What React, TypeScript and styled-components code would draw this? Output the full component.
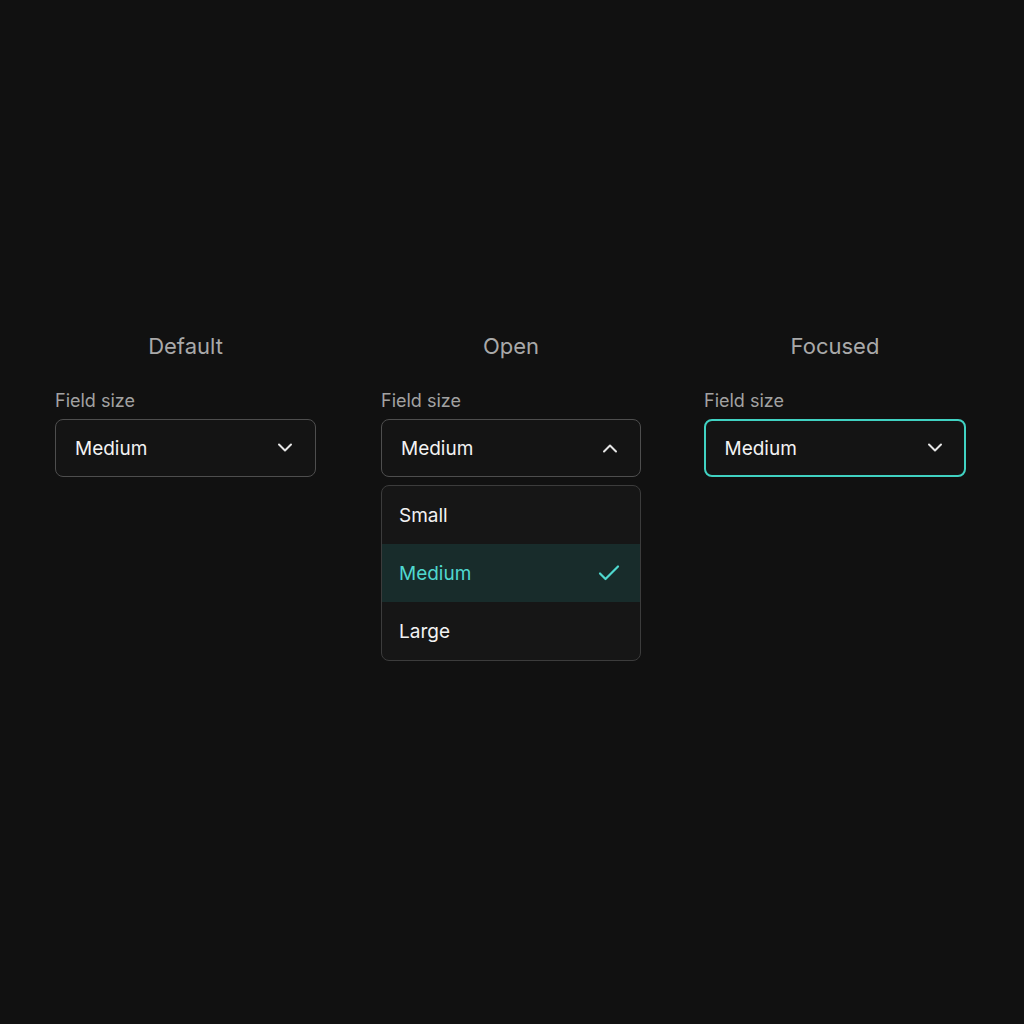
import React from 'react';
import styled, { createGlobalStyle } from 'styled-components';

const GlobalStyle = createGlobalStyle`
  html, body {
    margin: 0;
    padding: 0;
    background: #111111;
  }
  body {
    font-family: Inter, "Noto Sans", "Liberation Sans", sans-serif;
    -webkit-font-smoothing: antialiased;
  }
`;

const Page = styled.div`
  width: 1024px;
  height: 1024px;
  background: #111111;
  padding: 332px 0 0 55px;
  box-sizing: border-box;
`;

const Columns = styled.div`
  display: grid;
  grid-template-columns: 261px 261px 261px;
  column-gap: 64px;
`;

const Column = styled.div<{ $nudge?: number }>`
  display: flex;
  flex-direction: column;
  margin-left: ${p => p.$nudge ?? 0}px;
`;

const Heading = styled.div`
  text-align: center;
  font-size: 22px;
  color: #a9a9a9;
  line-height: 28px;
  margin-bottom: 30px;
`;

const Label = styled.div`
  font-size: 18px;
  color: #a2a2a2;
  line-height: 22px;
  margin-bottom: 7px;
`;

const Trigger = styled.div<{ $focused?: boolean }>`
  height: 58px;
  box-sizing: border-box;
  border: ${p => (p.$focused ? '2px solid #40d2c2' : '1.5px solid #4e4e4e')};
  border-radius: 8px;
  background: #141414;
  display: flex;
  align-items: center;
  justify-content: space-between;
  padding: 0 ${p => (p.$focused ? 21.5 : 22)}px 0 ${p => (p.$focused ? 18.5 : 19)}px;
  font-size: 19px;
  color: #f2f2f2;
`;

const Menu = styled.div`
  margin-top: 8px;
  border: 1px solid #3c3c3c;
  border-radius: 8px;
  background: #161616;
  overflow: hidden;
  display: flex;
  flex-direction: column;
`;

const Option = styled.div<{ $selected?: boolean }>`
  height: 58px;
  display: flex;
  align-items: center;
  justify-content: space-between;
  padding: 0 20px 0 17px;
  font-size: 19px;
  color: ${p => (p.$selected ? '#4fd8cf' : '#f2f2f2')};
  background: ${p => (p.$selected ? '#182c2b' : 'transparent')};
`;

const Chevron: React.FC<{ up?: boolean }> = ({ up }) => (
  <svg width="16" height="10" viewBox="0 0 16 10" fill="none">
    <path
      d={up ? 'M2 8.5 L8 2.5 L14 8.5' : 'M2 1.5 L8 7.5 L14 1.5'}
      stroke="#e6e6e6"
      strokeWidth="2"
      strokeLinecap="round"
      strokeLinejoin="round"
    />
  </svg>
);

const Check = () => (
  <svg width="22" height="18" viewBox="0 0 22 18" fill="none">
    <path
      d="M2 9.5 L7.5 15 L20 2.5"
      stroke="#4fd8cf"
      strokeWidth="2.2"
      strokeLinecap="round"
      strokeLinejoin="round"
    />
  </svg>
);

const App: React.FC = () => {
  return (
    <>
      <GlobalStyle />
      <Page>
        <Columns>
          <Column>
            <Heading>Default</Heading>
            <Label>Field size</Label>
            <Trigger>
              <span>Medium</span>
              <Chevron />
            </Trigger>
          </Column>
          <Column $nudge={1}>
            <Heading>Open</Heading>
            <Label>Field size</Label>
            <Trigger>
              <span>Medium</span>
              <Chevron up />
            </Trigger>
            <Menu>
              <Option>Small</Option>
              <Option $selected>
                <span>Medium</span>
                <Check />
              </Option>
              <Option>Large</Option>
            </Menu>
          </Column>
          <Column $nudge={-1}>
            <Heading>Focused</Heading>
            <Label>Field size</Label>
            <Trigger $focused>
              <span>Medium</span>
              <Chevron />
            </Trigger>
          </Column>
        </Columns>
      </Page>
    </>
  );
};

export default App;
